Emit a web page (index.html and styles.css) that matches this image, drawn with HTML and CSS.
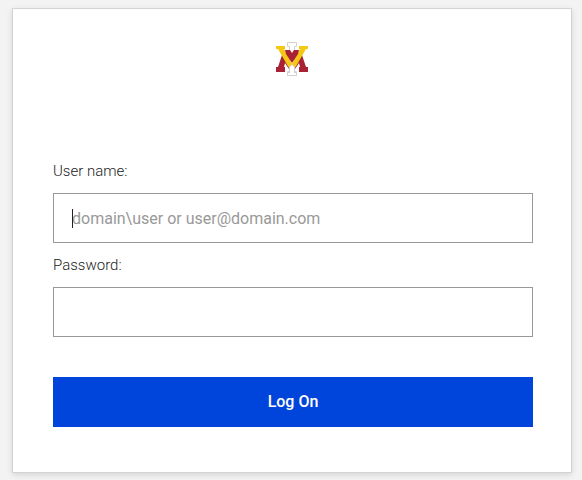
FILE: index.html
```html
<!DOCTYPE html>
<html lang="en">
<head>
<meta charset="utf-8">
<meta name="viewport" content="width=device-width, initial-scale=1">
<title>Log On</title>
<link rel="stylesheet" href="styles.css">
</head>
<body>
<main class="card">
  <svg class="logo" viewBox="0 0 34 36" role="img" aria-label="VMI">
    <path d="M11.500 1.500h9v4h-2v25h2v4h-9v-4h2v-25h-2z" fill="#fff" stroke="#d2d2d5"/>
    <path d="M6 14h5l5 10 5-10h5l4 12h2v5h-9v-5h1l-1-4-4 6h-6l-4-6-1 4h1v5H0v-5h2z" fill="#a92135"/>
    <path d="M0 5h9v3H8l8 15 8-15h-1V5h9v3h-2L19 27h-6L2 8H0z" fill="#f5c814"/>
    <path d="M9 9h5l2 3 2-3h5l-1 4-6 9-6-9z" fill="#a92135"/>
    <path d="M16 23l3 3v5h2v4H11v-4h2v-5z" fill="#d2d2d5"/>
    <path d="M16 24l2 2v6h2v2h-8v-2h2v-6z" fill="#fff"/>
  </svg>
  <form class="form">
    <label class="label" for="username">User name:</label>
    <div class="field">
      <input class="input" id="username" type="text" placeholder="domain\user or user@domain.com">
      <span class="caret" aria-hidden="true"></span>
    </div>
    <label class="label" for="password">Password:</label>
    <div class="field">
      <input class="input" id="password" type="password">
    </div>
    <button class="submit" type="submit">Log On</button>
  </form>
</main>
</body>
</html>
```
FILE: styles.css
```css
* { box-sizing: border-box; }

body {
  margin: 0;
  padding: 8px 10px 7px 12px;
  background: #f3f3f3;
  color: #333;
  font-family: Roboto, sans-serif;
}

.card {
  padding: 32px 38px 45px 40px;
  background: #fff;
  border: 1px solid #d3d3d3;
  box-shadow: 0 2px 6px rgba(0, 0, 0, 0.12);
}

.logo {
  display: block;
  width: 34px;
  height: 36px;
  margin: 0 auto 84px;
}

.form { display: flex; flex-direction: column; }

.label {
  margin-bottom: 12px;
  font-size: 15px;
  line-height: 20px;
  font-weight: 300;
  color: #222;
}

.field { position: relative; margin-bottom: 12px; }

.input {
  display: block;
  width: 100%;
  height: 50px;
  padding: 0 18px;
  border: 1px solid #999;
  border-radius: 0;
  background: #fff;
  color: #333;
  font: 400 16px/24px Roboto, sans-serif;
  outline: 0;
}

.input::placeholder { color: #999; opacity: 1; }

.caret {
  position: absolute;
  top: 16px;
  left: 19px;
  width: 1px;
  height: 19px;
  background: #222;
}

.input:not(:placeholder-shown) + .caret { display: none; }

.submit {
  height: 50px;
  margin-top: 28px;
  border: 0;
  background: #0045db;
  color: #fff;
  font: 500 16px/24px Roboto, sans-serif;
}
```
